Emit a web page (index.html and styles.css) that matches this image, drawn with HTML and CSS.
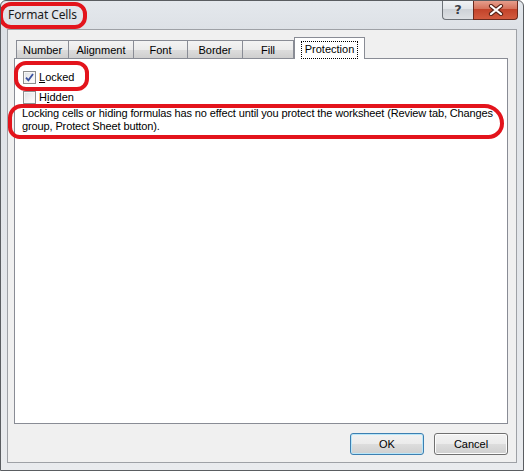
FILE: index.html
```html
<!DOCTYPE html>
<html>
<head>
<meta charset="utf-8">
<link rel="stylesheet" href="styles.css">
</head>
<body>
<div class="window">
  <div class="titlebar">
    <span class="title">Format Cells</span>
    <div class="caption">
      <div class="cap-btn help"><span>?</span></div>
      <div class="cap-btn close">
        <svg width="16" height="12" viewBox="0 0 16 12"><path d="M3 2 L13 10 M13 2 L3 10" stroke="#5a2418" stroke-width="4.2" stroke-linecap="round"/><path d="M3 2 L13 10 M13 2 L3 10" stroke="#ffffff" stroke-width="2.2" stroke-linecap="round"/></svg>
      </div>
    </div>
  </div>
  <div class="client">
    <div class="tabs">
      <div class="tab w-number">Number</div>
      <div class="tab w-align">Alignment</div>
      <div class="tab w-font">Font</div>
      <div class="tab w-border">Border</div>
      <div class="tab w-fill">Fill</div>
      <div class="tab selected w-prot"><span class="focus">Protection</span></div>
    </div>
    <div class="panel">
      <label class="check-row first">
        <span class="box checked"><svg width="9" height="9" viewBox="0 0 9 9"><path d="M1 4.6 L3.4 7.4 L8 1" fill="none" stroke="#3b52a0" stroke-width="1.8"/></svg></span>
        <span><u>L</u>ocked</span>
      </label>
      <label class="check-row">
        <span class="box"></span>
        <span>H<u>i</u>dden</span>
      </label>
      <p class="note">Locking cells or hiding formulas has no effect until you protect the worksheet (Review tab, Changes group, Protect Sheet button).</p>
    </div>
    <div class="buttons">
      <div class="button default">OK</div>
      <div class="button">Cancel</div>
    </div>
  </div>
  <div class="mark mark-title"></div>
  <div class="mark mark-locked"></div>
  <div class="mark mark-note"></div>
</div>
</body>
</html>
```

FILE: styles.css
```css
* { box-sizing: border-box; }
html, body { margin: 0; padding: 0; background: #ffffff; }
body { font-family: "Liberation Sans", Arial, sans-serif; font-size: 11px; color: #000; }

.window {
  position: relative;
  width: 524px;
  height: 471px;
  display: flex;
  flex-direction: column;
  background: linear-gradient(to bottom, #e4e8ed 0px, #dde1e6 29px, #e9ebee 100%);
  border: 1px solid #5a5d61;
  border-radius: 6px 6px 0 0;
  overflow: hidden;
}

.titlebar {
  height: 28px;
  display: flex;
  align-items: flex-start;
  padding-left: 7px;
  flex: none;
}
.title {
  font-family: "Noto Sans", "Open Sans", sans-serif;
  font-size: 12px;
  line-height: 28px;
  color: #1a1a1a;
  letter-spacing: -0.1px;
}
.caption {
  margin-left: auto;
  margin-right: 5px;
  display: flex;
  margin-top: -1px;
}
.cap-btn {
  height: 20px;
  display: flex;
  align-items: center;
  justify-content: center;
  border: 1px solid #6d7278;
  border-top: none;
}
.help {
  width: 31px;
  border-radius: 0 0 0 4px;
  border-right: none;
  background: linear-gradient(to bottom, #f2f4f6 0%, #e2e5e9 45%, #ced2d7 50%, #dde0e4 100%);
  font-family: "DejaVu Sans", sans-serif;
  font-size: 13px;
  color: #3c4046;
  font-weight: bold;
  text-shadow: 0 0 1px #fff;
}
.close {
  width: 45px;
  border-radius: 0 0 4px 0;
  background: linear-gradient(to bottom, #e8a493 0%, #d6735c 45%, #c3432a 50%, #d25b3f 100%);
  border-color: #6b2a1e;
}

.client {
  flex: 1;
  margin: 0 6px 7px 6px;
  border: 1px solid #9ea1a6;
  background: #f0f0f0;
  display: flex;
  flex-direction: column;
  padding: 7px 8px 7px 6px;
}

.tabs {
  display: flex;
  align-items: flex-end;
  height: 21px;
  padding-left: 2px;
}
.tab {
  height: 18px;
  border: 1px solid #898c95;
  border-bottom: none;
  margin-right: -1px;
  background: linear-gradient(to bottom, #f3f3f3 0%, #ebebeb 50%, #dddddd 51%, #cfcfcf 100%);
  display: flex;
  align-items: center;
  justify-content: center;
  line-height: 13px;
  padding-top: 1px;
}
.w-number { width: 53px; }
.w-align { width: 66px; }
.w-font { width: 55px; }
.w-border { width: 56px; }
.w-fill { width: 52px; }
.w-prot { width: 71px; margin-left: 1px; }
.tab.selected {
  height: 22px;
  background: #ffffff;
  margin-bottom: -1px;
  position: relative;
  z-index: 1;
  align-items: flex-start;
  padding-top: 3px;
}
.focus {
  border: 1px dotted #000;
  padding: 1px 3px 2px 3px;
}

.panel {
  height: 366px;
  border: 1px solid #898c95;
  background: #ffffff;
  padding: 12px 1px 0 7px;
}
.check-row {
  display: flex;
  align-items: center;
  height: 13px;
  margin-bottom: 7px;
  margin-left: 1px;
  line-height: 13px;
}
.box {
  width: 13px;
  height: 13px;
  border: 1px solid #8e8f8f;
  background: linear-gradient(135deg, #dcdfe3 0%, #f4f4f4 60%, #ffffff 100%);
  box-shadow: inset 0 0 0 1px #f6f6f6;
  margin-right: 3px;
  display: flex;
  align-items: center;
  justify-content: center;
  flex: none;
}
.note {
  margin: -4px 0 0 0;
  line-height: 13px;
  letter-spacing: -0.12px;
}

.buttons {
  display: flex;
  justify-content: flex-end;
  margin-top: 9px;
  gap: 10px;
  padding-right: 0;
}
.button {
  width: 74px;
  height: 22px;
  border: 1px solid #707070;
  border-radius: 3px;
  background: linear-gradient(to bottom, #f2f2f2 0%, #ebebeb 50%, #dddddd 51%, #cfcfcf 100%);
  display: flex;
  align-items: center;
  justify-content: center;
  box-shadow: inset 0 0 0 1px #fcfcfc;
}
.button.default {
  border-color: #3c7fb1;
  box-shadow: inset 0 0 0 1px #b8e6f9;
}

.mark {
  position: absolute;
  border: 4px solid #e3141c;
  pointer-events: none;
}
.mark-title {
  left: -2px;
  top: 1px;
  width: 88px;
  height: 27px;
  border-radius: 12px;
}
.mark-locked {
  left: 13px;
  top: 60px;
  width: 75px;
  height: 30px;
  border-radius: 12px;
}
.mark-note {
  left: 7px;
  top: 103px;
  width: 496px;
  height: 35px;
  border-radius: 14px 20px 16px 12px;
}
```
